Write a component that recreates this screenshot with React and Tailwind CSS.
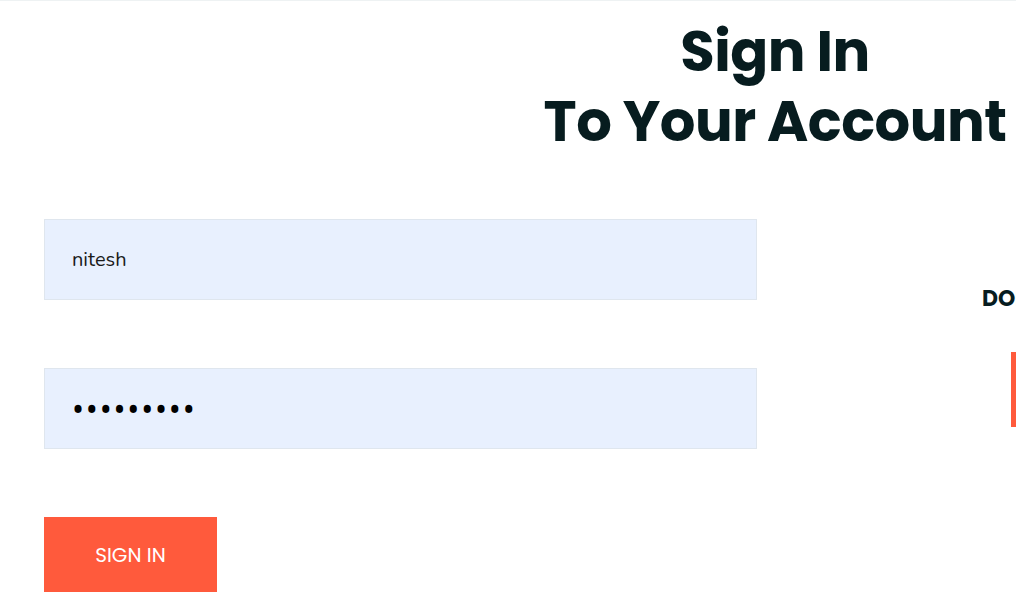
export default function App() {
  return (
    <div className="w-[1016px] h-[612px] overflow-hidden bg-white border-t border-[#eef2f3]">
      <div className="w-[1550px]">
        <h1 className="text-center font-['Poppins','Inter',sans-serif] font-bold text-[56px] leading-[70px] text-[#071c1f] pt-[16px] tracking-[-0.5px]">
          Sign In
          <br />
          To Your Account
        </h1>
        <div className="flex mt-[62px]">
          <div className="ml-[44px] w-[713px] flex flex-col gap-[68px]">
            <div className="h-[81px] border border-[#dfe6ee] bg-[#e8f0fe] pl-[27px] flex items-center font-['Nunito','Lato',sans-serif] text-[20px] text-[#1a1a1a]">
              nitesh
            </div>
            <div className="h-[81px] border border-[#dfe6ee] bg-[#e8f0fe] pl-[27px] flex items-center font-['Liberation Sans',sans-serif] text-[32px] leading-[32px] text-black tracking-[1.8px]">
              •••••••••
            </div>
            <div className="w-[173px] h-[75px] bg-[#ff5a3c] flex items-center justify-center text-white font-['Poppins','Inter',sans-serif] text-[20px] uppercase">
              Sign In
            </div>
          </div>
          <div className="ml-[225px] pt-[66px] flex flex-col">
            <div className="font-['Poppins','Inter',sans-serif] font-bold text-[22px] text-[#071c1f] leading-[28px] whitespace-nowrap">
              DON'T HAVE AN ACCOUNT?
            </div>
            <div className="ml-[29px] mt-[39px] w-[200px] h-[75px] bg-[#ff5a3c]"></div>
          </div>
        </div>
      </div>
    </div>
  );
}
